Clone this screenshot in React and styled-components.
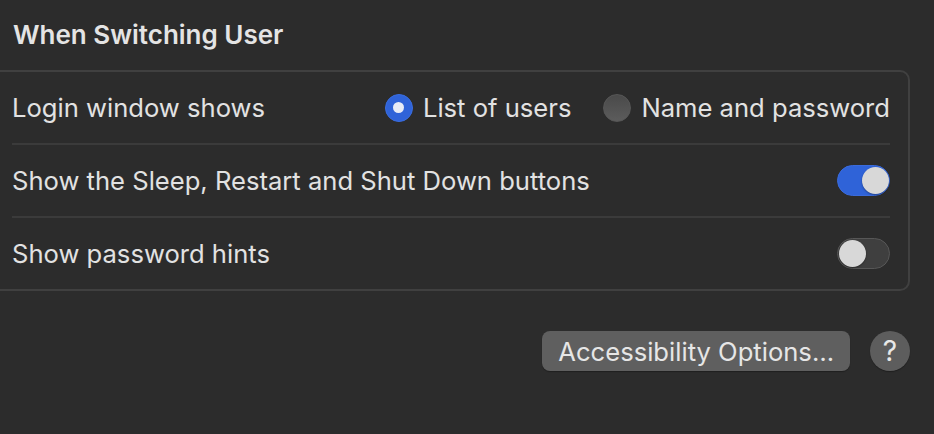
import React, { useState } from 'react'
import styled, { createGlobalStyle } from 'styled-components'

const Global = createGlobalStyle`
  html, body {
    margin: 0;
    padding: 0;
    background: #2c2c2c;
  }
  body {
    font-family: Inter, "Noto Sans", sans-serif;
    color: #e2e2e2;
    -webkit-font-smoothing: antialiased;
  }
`

const Page = styled.div`
  width: 934px;
  height: 434px;
  overflow: hidden;
  padding: 20px 24px 0 0;
  box-sizing: border-box;
`

const Heading = styled.h2`
  margin: 0 0 20px 13px;
  font-size: 26px;
  font-weight: 600;
  line-height: 30px;
  color: #e4e4e4;
`

const Panel = styled.div`
  margin-left: -30px;
  border: 2px solid #404040;
  border-radius: 10px;
  padding: 0 18px 0 40px;
`

const Row = styled.div`
  display: flex;
  align-items: center;
  justify-content: space-between;
  height: 71px;
  border-top: ${p => (p.first ? 'none' : '2px solid #3b3b3b')};
`

const Label = styled.span`
  font-size: 25.6px;
  color: #e2e2e2;
`

const RadioGroup = styled.div`
  display: flex;
  align-items: center;
  gap: 32px;
`

const RadioItem = styled.label`
  display: flex;
  align-items: center;
  gap: 10px;
  font-size: 25.6px;
  color: #e2e2e2;
  cursor: pointer;
`

const RadioDot = styled.span`
  width: 28px;
  height: 28px;
  border-radius: 50%;
  box-sizing: border-box;
  display: flex;
  align-items: center;
  justify-content: center;
  background: ${p => (p.on ? '#2f63d8' : 'linear-gradient(#4a4a4a, #5c5c5c)')};
  border: 1px solid ${p => (p.on ? '#3a6de0' : '#575757')};
  &::after {
    content: '';
    display: ${p => (p.on ? 'block' : 'none')};
    width: 11px;
    height: 11px;
    border-radius: 50%;
    background: #e8ecf6;
  }
`

const Track = styled.button`
  position: relative;
  width: 53px;
  height: 31px;
  padding: 0;
  border-radius: 16px;
  box-sizing: border-box;
  border: 1px solid ${p => (p.on ? '#3a6bdc' : '#575757')};
  background: ${p => (p.on ? '#2f63d8' : '#3f3f3f')};
  cursor: pointer;
`

const Knob = styled.span`
  position: absolute;
  top: 1px;
  left: ${p => (p.on ? '24px' : '1px')};
  width: 27px;
  height: 27px;
  border-radius: 50%;
  background: #d8d8d8;
  box-shadow: 0 1px 2px rgba(0, 0, 0, 0.35);
`

const Footer = styled.div`
  display: flex;
  justify-content: flex-end;
  align-items: center;
  gap: 20px;
  margin-top: 40px;
`

const Button = styled.button`
  height: 40px;
  padding: 0 16px;
  border: none;
  border-radius: 8px;
  background: #5f5f5f;
  color: #e6e6e6;
  font-family: Inter, "Noto Sans", sans-serif;
  font-size: 25.6px;
  box-shadow: 0 1px 1px rgba(0, 0, 0, 0.3);
`

const Help = styled.button`
  width: 40px;
  height: 40px;
  border-radius: 50%;
  border: none;
  background: #5d5d5d;
  color: #e8e8e8;
  font-family: Inter, "Noto Sans", sans-serif;
  font-size: 28px;
  font-weight: 400;
  padding: 0;
  display: flex;
  align-items: center;
  justify-content: center;
  box-shadow: 0 1px 1px rgba(0, 0, 0, 0.3);
`

function Toggle({ on, onChange }) {
  return (
    <Track on={on} onClick={() => onChange(!on)}>
      <Knob on={on} />
    </Track>
  )
}

export default function App() {
  const [mode, setMode] = useState('list')
  const [showButtons, setShowButtons] = useState(true)
  const [hints, setHints] = useState(false)

  return (
    <>
      <Global />
      <Page>
        <Heading>When Switching User</Heading>
        <Panel>
          <Row first>
            <Label>Login window shows</Label>
            <RadioGroup>
              <RadioItem onClick={() => setMode('list')}>
                <RadioDot on={mode === 'list'} />
                List of users
              </RadioItem>
              <RadioItem onClick={() => setMode('name')}>
                <RadioDot on={mode === 'name'} />
                Name and password
              </RadioItem>
            </RadioGroup>
          </Row>
          <Row>
            <Label>Show the Sleep, Restart and Shut Down buttons</Label>
            <Toggle on={showButtons} onChange={setShowButtons} />
          </Row>
          <Row>
            <Label>Show password hints</Label>
            <Toggle on={hints} onChange={setHints} />
          </Row>
        </Panel>
        <Footer>
          <Button>Accessibility Options…</Button>
          <Help>?</Help>
        </Footer>
      </Page>
    </>
  )
}
